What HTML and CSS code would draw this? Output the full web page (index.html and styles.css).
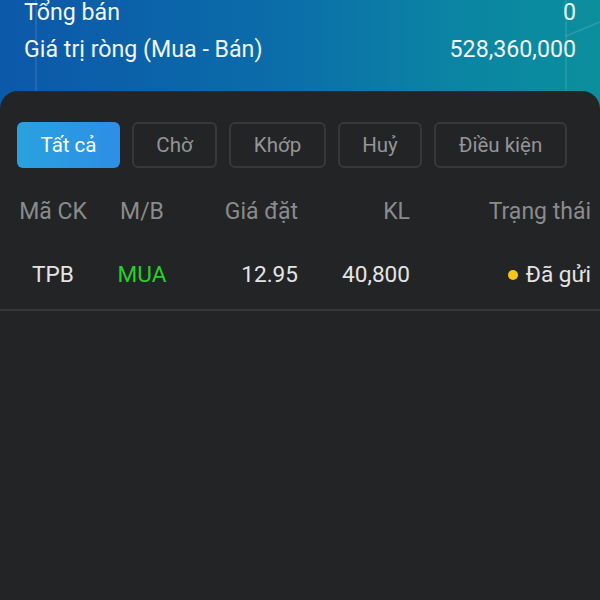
FILE: index.html
```html
<!DOCTYPE html>
<html lang="vi">
<head>
<meta charset="utf-8">
<link rel="stylesheet" href="styles.css">
</head>
<body>
<div class="screen">
  <header class="summary">
    <svg class="decor" width="600" height="91" viewBox="0 0 600 91">
      <line x1="36" y1="0" x2="36" y2="91" stroke="rgba(255,255,255,0.13)" stroke-width="1.5"/>
      <line x1="566" y1="0" x2="566" y2="91" stroke="rgba(255,255,255,0.13)" stroke-width="1.5"/>
      <line x1="566" y1="36" x2="600" y2="22" stroke="rgba(255,255,255,0.13)" stroke-width="1.5"/>
    </svg>
    <div class="sum-row"><span>Tổng bán</span><span>0</span></div>
    <div class="sum-row"><span>Giá trị ròng (Mua - Bán)</span><span>528,360,000</span></div>
  </header>
  <main class="panel">
    <div class="tabs">
      <button class="tab active w1">Tất cả</button>
      <button class="tab w2">Chờ</button>
      <button class="tab w3">Khớp</button>
      <button class="tab w4">Huỷ</button>
      <button class="tab w5">Điều kiện</button>
    </div>
    <div class="grid head">
      <span class="c1">Mã CK</span>
      <span class="c2">M/B</span>
      <span class="c3">Giá đặt</span>
      <span class="c4">KL</span>
      <span class="c5">Trạng thái</span>
    </div>
    <div class="grid row">
      <span class="c1">TPB</span>
      <span class="c2 buy">MUA</span>
      <span class="c3">12.95</span>
      <span class="c4">40,800</span>
      <span class="c5"><i class="dot"></i>Đã gửi</span>
    </div>
  </main>
</div>
</body>
</html>
```
FILE: styles.css
```css
* { box-sizing: border-box; }
html, body { margin: 0; padding: 0; }
body {
  width: 600px;
  height: 600px;
  overflow: hidden;
  font-family: Roboto, "Noto Sans", "Liberation Sans", sans-serif;
  background: #232426;
}
.screen {
  display: flex;
  flex-direction: column;
  height: 600px;
  background: linear-gradient(90deg, #0c58a9 0%, #0b6ca9 45%, #0b84a4 75%, #0b8f9c 100%);
}
.summary {
  position: relative;
  height: 91px;
  padding: 0 24px;
  color: #f2f6fa;
  font-size: 23.2px;
}
.decor {
  position: absolute;
  left: 0;
  top: 0;
}
.sum-row {
  position: relative;
  display: flex;
  justify-content: space-between;
  align-items: center;
  height: 37px;
}
.sum-row:first-of-type { margin-top: -7px; }
.panel {
  flex: 1;
  background: #232426;
  border-radius: 18px 18px 0 0;
  padding-top: 31px;
}
.tabs {
  display: flex;
  gap: 12px;
  padding-left: 17px;
  height: 46px;
}
.tab {
  height: 46px;
  border: 2px solid #36383a;
  border-radius: 6px;
  background: transparent;
  color: #949596;
  font-family: inherit;
  font-size: 20.5px;
  padding: 0;
}
.tab.active {
  border: none;
  background: linear-gradient(90deg, #29a2df, #2d8ee6);
  color: #ffffff;
}
.w1 { width: 103px; }
.w2 { width: 85px; }
.w3 { width: 97px; }
.w4 { width: 84px; }
.w5 { width: 133px; }
.grid {
  display: grid;
  grid-template-columns: 106px 72px 120px 112px 181px;
  align-items: center;
}
.head {
  margin-top: 12px;
  height: 62px;
  color: #8a8b8c;
  font-size: 23px;
}
.row {
  height: 69px;
  padding-bottom: 3px;
  color: #e4e4e4;
  font-size: 22.6px;
  border-bottom: 2px solid #36373a;
}
.c1, .c2 { text-align: center; }
.c3, .c4, .c5 { text-align: right; }
.buy { color: #24d12a; }
.dot {
  display: inline-block;
  width: 10px;
  height: 10px;
  border-radius: 50%;
  background: #f6c71a;
  margin-right: 8px;
  vertical-align: 2px;
}
```
